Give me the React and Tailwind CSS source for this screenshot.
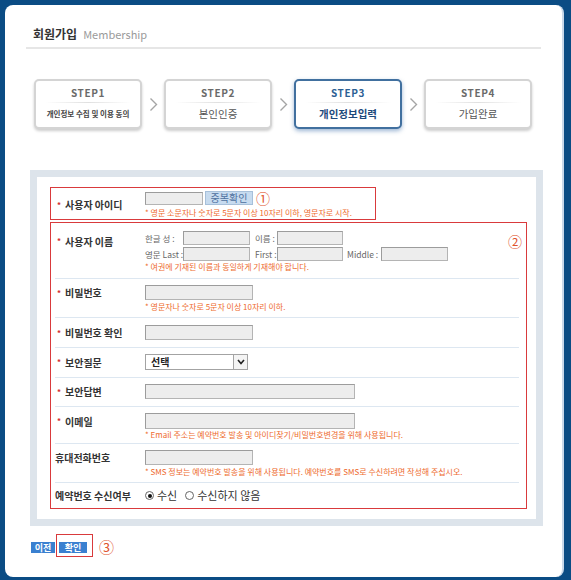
import clsx from 'clsx'

const KR = "font-['Noto_Sans_CJK_KR','Noto_Sans',sans-serif]"

function Chevron() {
  return (
    <div className="w-[22px] flex items-center justify-center">
      <svg width="9" height="15" viewBox="0 0 9 15">
        <polyline points="1.5,1.5 7.5,7.5 1.5,13.5" fill="none" stroke="#a5a5a5" strokeWidth="1.4" />
      </svg>
    </div>
  )
}

function Step({ n, label, active, small }) {
  return (
    <div
      className={clsx(
        'w-[108px] h-[50px] rounded-[5px] border-2 bg-white flex flex-col items-center',
        active
          ? 'border-[#41709f] shadow-[0_2px_4px_rgba(60,110,170,0.5)]'
          : 'border-[#d4d4d4] shadow-[0_2px_3px_rgba(0,0,0,0.2)]'
      )}
    >
      <div className={clsx('pt-[5px] text-[10px] leading-[14px] font-bold tracking-[0.6px]', active ? 'text-[#2c5f94]' : 'text-[#6a6a6a]')}>
        STEP{n}
      </div>
      <div className="mt-[2px] w-[86px] h-px bg-gradient-to-r from-transparent via-[#e0e0e0] to-transparent" />
      <div
        className={clsx(
          'mt-[4px] leading-[14px] whitespace-nowrap',
          small ? 'text-[7.5px] font-bold text-[#444]' : 'text-[10.5px]',
          active ? 'text-[#1d4a7c] font-bold' : small ? '' : 'text-[#555]'
        )}
      >
        {label}
      </div>
    </div>
  )
}

function Input({ w, h = 'h-[15px]' }) {
  return <div className={clsx('shrink-0 border border-[#b4b4b4] border-t-[#9c9c9c] border-l-[#9c9c9c] bg-[#ededed]', w, h)} />
}

function Label({ children, star = true }) {
  return (
    <div className="w-[90px] shrink-0 flex items-center text-[10px] font-bold text-[#333] whitespace-nowrap">
      {star ? <span className="text-[#d42a2a] text-[8px] w-[10px] pl-[2px]">*</span> : null}
      {children}
    </div>
  )
}

function Hint({ children }) {
  return <div className="text-[8px] leading-[10px] text-[#ee6a2c] whitespace-nowrap">{children}</div>
}

function Row({ h, pt, last, children }) {
  return (
    <div className={clsx('flex ml-[4px] mr-[7px]', h, pt, !last && 'border-b border-[#dde7f1]')}>{children}</div>
  )
}

function Radio({ checked, label }) {
  return (
    <div className="flex items-center gap-[3px]">
      <span className="w-[9px] h-[9px] rounded-full border border-[#666] bg-white flex items-center justify-center">
        {checked ? <span className="w-[4px] h-[4px] rounded-full bg-[#111]" /> : null}
      </span>
      <span className="text-[11px] text-[#333]">{label}</span>
    </div>
  )
}

export default function App() {
  return (
    <div className={clsx('w-[571px] h-[580px] bg-[#0b4c84] pl-[5px] pt-[5px] pr-[7px] pb-[3px]', KR)}>
      <div className="h-full rounded-[8px] bg-white border-r-2 border-[#c9d9ea] px-[21px] pt-[21px]">
        <div className="flex items-end border-b-2 border-[#e6e6e6] pb-[5px] pl-[7px]">
          <span className="text-[12px] leading-[16px] font-bold text-[#333]">회원가입</span>
          <span className="ml-[6px] text-[11px] leading-[15px] text-[#9a9a9a]">Membership</span>
        </div>

        <div className="flex mt-[30px] pl-[8px]">
          <Step n={1} label="개인정보 수집 및 이용 동의" small />
          <Chevron />
          <Step n={2} label="본인인증" />
          <Chevron />
          <Step n={3} label="개인정보입력" active />
          <Chevron />
          <Step n={4} label="가입완료" />
        </div>

        <div className="mt-[41px] ml-[4px] w-[513px] bg-[#dde4eb] p-[7px]">
          <div className="bg-white pt-[10px] pb-[10px] pl-[13px]">
            <div className="w-[326px] h-[33px] border border-[#d93a3c] pl-[4px] pt-[3px]">
              <div className="flex">
                <Label>사용자 아이디</Label>
                <div className="flex flex-col">
                  <div className="flex items-center h-[14px]">
                    <Input w="w-[58px]" h="h-[13px]" />
                    <div className="ml-[2px] w-[48px] h-[14px] bg-[#c7dbef] border border-[#a7c0da] text-[10px] leading-[12px] text-[#4d6f9e] text-center">중복확인</div>
                    <span className="ml-[3px] text-[14px] leading-[14px] text-[#e0532c]">①</span>
                  </div>
                  <div className="mt-[3px]">
                    <Hint>* 영문 소문자나 숫자로 5문자 이상 10자리 이하, 영문자로 시작.</Hint>
                  </div>
                </div>
              </div>
            </div>

            <div className="relative mt-[2px] w-[477px] h-[287px] border border-[#d93a3c]">
              <span className="absolute right-[4px] top-[11px] text-[14px] leading-[14px] text-[#e0532c]">②</span>

              <Row h="h-[56px]" pt="pt-[8px]">
                <div className="flex items-start">
                  <div className="h-[20px] flex items-center">
                    <Label>사용자 이름</Label>
                  </div>
                </div>
                <div className="flex flex-col text-[8.5px] text-[#666] leading-[14px] whitespace-nowrap">
                  <div className="flex items-center">
                    <span className="w-[38px] shrink-0">한글 성 :</span>
                    <Input w="w-[67px]" h="h-[14px]" />
                    <span className="ml-[5px] w-[22px] shrink-0">이름 :</span>
                    <Input w="w-[66px]" h="h-[14px]" />
                  </div>
                  <div className="flex items-center mt-[2px]">
                    <span className="w-[38px] shrink-0">영문 Last :</span>
                    <Input w="w-[67px]" h="h-[14px]" />
                    <span className="ml-[5px] w-[22px] shrink-0">First :</span>
                    <Input w="w-[66px]" h="h-[14px]" />
                    <span className="ml-[4px] w-[34px] shrink-0">Middle :</span>
                    <Input w="w-[67px]" h="h-[14px]" />
                  </div>
                  <div className="mt-[1px]">
                    <Hint>* 여권에 기재된 이름과 동일하게 기재해야 합니다.</Hint>
                  </div>
                </div>
              </Row>

              <Row h="h-[39px]" pt="pt-[6px]">
                <div className="h-[15px] flex"><Label>비밀번호</Label></div>
                <div className="flex flex-col">
                  <Input w="w-[108px]" />
                  <div className="mt-[2px]"><Hint>* 영문자나 숫자로 5문자 이상 10자리 이하.</Hint></div>
                </div>
              </Row>

              <Row h="h-[30px]" pt="pt-[7px]">
                <div className="h-[15px] flex"><Label>비밀번호 확인</Label></div>
                <Input w="w-[108px]" />
              </Row>

              <Row h="h-[30px]" pt="pt-[6px]">
                <div className="h-[16px] flex"><Label>보안질문</Label></div>
                <div className="w-[103px] h-[16px] border border-[#a3a3a3] bg-white flex">
                  <div className="flex-1 pl-[5px] text-[10px] leading-[14px] font-bold text-[#222]">선택</div>
                  <div className="w-[14px] h-full border-l border-[#a3a3a3] bg-[#f4f4f4] flex items-center justify-center">
                    <svg width="8" height="6" viewBox="0 0 8 6">
                      <polyline points="1,1 4,4.5 7,1" fill="none" stroke="#222" strokeWidth="1.6" />
                    </svg>
                  </div>
                </div>
              </Row>

              <Row h="h-[29px]" pt="pt-[6px]">
                <div className="h-[15px] flex"><Label>보안답변</Label></div>
                <Input w="w-[210px]" />
              </Row>

              <Row h="h-[37px]" pt="pt-[6px]">
                <div className="h-[16px] flex"><Label>이메일</Label></div>
                <div className="flex flex-col">
                  <Input w="w-[210px]" h="h-[16px]" />
                  <div className="mt-[1px]"><Hint>* Email 주소는 예약번호 발송 및 아이디찾기/비밀번호변경을 위해 사용됩니다.</Hint></div>
                </div>
              </Row>

              <Row h="h-[39px]" pt="pt-[6px]">
                <div className="h-[15px] flex"><Label star={false}>휴대전화번호</Label></div>
                <div className="flex flex-col">
                  <Input w="w-[108px]" />
                  <div className="mt-[2px]"><Hint>* SMS 정보는 예약번호 발송을 위해 사용됩니다. 예약번호를 SMS로 수신하려면 작성해 주십시오.</Hint></div>
                </div>
              </Row>

              <Row h="h-[25px]" pt="pt-0" last>
                <div className="flex items-center"><Label star={false}>예약번호 수신여부</Label></div>
                <div className="flex items-center gap-[8px]">
                  <Radio checked label="수신" />
                  <Radio label="수신하지 않음" />
                </div>
              </Row>
            </div>
          </div>
        </div>

        <div className="flex items-start mt-[8px] ml-[5px]">
          <div className="mt-[8px] w-[24px] h-[11px] bg-[#3a80d0] text-[9px] leading-[11px] font-bold text-white text-center">이전</div>
          <div className="ml-[1px] w-[37px] h-[23px] border-[1.5px] border-[#d93a3c] pl-[2px] pt-[6.5px]">
            <div className="w-[28px] h-[11px] bg-[#3a80d0] text-[9px] leading-[11px] font-bold text-white text-center">확인</div>
          </div>
          <span className="ml-[6px] mt-[5px] text-[15px] leading-[16px] text-[#e0532c]">③</span>
        </div>
      </div>
    </div>
  )
}
